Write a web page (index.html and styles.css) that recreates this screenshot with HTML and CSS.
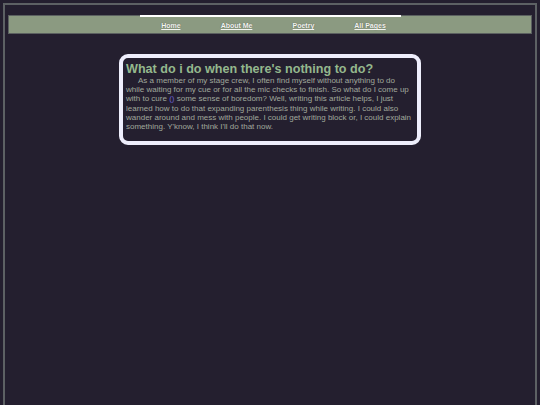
FILE: index.html
```html
<!DOCTYPE html>
<html>
<head>
<meta charset="utf-8">
<link rel="stylesheet" href="styles.css">
</head>
<body>
<div class="frame">
  <nav class="nav">
    <ul class="links">
      <li><a href="#">Home</a></li>
      <li><a href="#">About Me</a></li>
      <li><a href="#">Poetry</a></li>
      <li><a href="#">All Pages</a></li>
    </ul>
  </nav>
  <div class="card">
    <h1 class="title">What do i do when there's nothing to do?</h1>
    <p class="text">As a member of my stage crew, I often find myself without anything to do while waiting for my cue or for all the mic checks to finish. So what do I come up with to cure <span class="paren">()</span> some sense of boredom? Well, writing this article helps, I just learned how to do that expanding parenthesis thing while writing. I could also wander around and mess with people. I could get writing block or, I could explain something. Y'know, I think I'll do that now.</p>
  </div>
</div>
</body>
</html>
```
FILE: styles.css
```css
html, body {
  margin: 0;
  padding: 0;
  background: #241f2f;
  height: 100%;
}
body {
  font-family: "Liberation Sans", Arial, sans-serif;
  overflow: hidden;
}
.frame {
  margin: 3px 3px 0 3px;
  border: 2px solid #5d6164;
  border-bottom: none;
  padding: 10px 3px 0 3px;
  min-height: 500px;
}
.nav {
  background: #8b9a81;
  border: 1px solid #5b6060;
  height: 17px;
}
.links {
  list-style: none;
  margin: 0 auto;
  padding: 0;
  width: 50%;
  border-top: 2px solid #ffffff;
  margin-top: -1px;
  display: flex;
  justify-content: center;
  gap: 40px;
  height: 17px;
  align-items: center;
  padding-left: 7px;
  box-sizing: border-box;
}
.links a {
  font-size: 7px;
  font-weight: bold;
  color: #f2f4ef;
  text-shadow: 0 0 1px #4a4f48;
  text-decoration: underline;
  display: block;
  margin-top: 2px;
}
.card {
  width: 288px;
  margin: 20px auto 0 auto;
  border: 4px solid #eeeefc;
  border-radius: 9px;
  padding: 4px 3px 10px 3px;
  box-sizing: content-box;
}
.title {
  margin: 0;
  font-size: 12.6px;
  line-height: 14px;
  color: #94b88d;
  font-weight: bold;
}
.text {
  margin: 0;
  font-size: 8px;
  line-height: 9.2px;
  color: #a0a89c;
  text-indent: 12px;
}
.paren {
  color: #6b5fd0;
}
```
